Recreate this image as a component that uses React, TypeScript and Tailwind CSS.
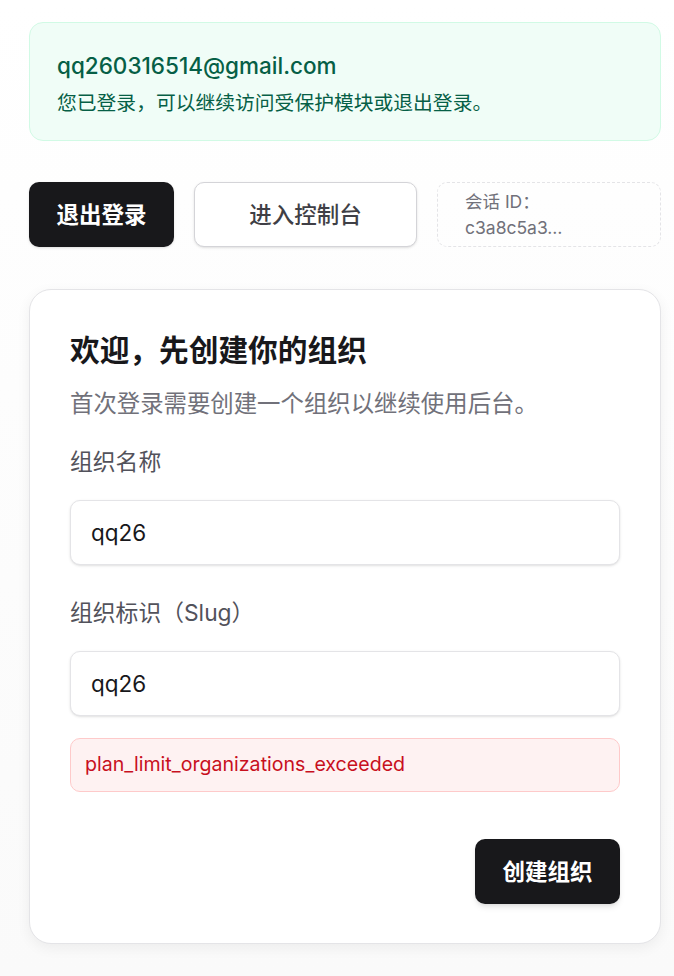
import { useState } from 'react';

export default function App() {
    const [orgName, setOrgName] = useState('qq26');
    const [orgSlug, setOrgSlug] = useState('qq26');

    return (
        <div className="min-h-screen bg-gradient-to-b from-white to-[#fafafa] font-['Inter','Noto_Sans_CJK_SC',sans-serif] pl-[29px] pr-[13px] pt-[22px] pb-[32px]">
            {/* Signed-in banner */}
            <div className="rounded-[14px] border border-[#d1fae5] bg-[#f0fdf7] px-[27px] pt-[28px] pb-[23px] text-[#065f46]">
                <div className="text-[22.5px] leading-[30px] font-medium">qq260316514@gmail.com</div>
                <p className="mt-[8px] text-[19.8px] leading-[28px]">您已登录，可以继续访问受保护模块或退出登录。</p>
            </div>

            {/* Actions */}
            <div className="mt-[41px] flex gap-[20px]">
                <button className="h-[65px] w-[145px] rounded-[10px] bg-[#18181b] text-[22.5px] font-bold text-white shadow-sm">
                    退出登录
                </button>
                <button className="h-[65px] w-[223px] rounded-[10px] border border-[#d4d4d8] bg-white text-[22.5px] font-medium text-[#3f3f46] shadow-sm">
                    进入控制台
                </button>
                <div className="h-[65px] flex-1 rounded-[10px] border border-dashed border-[#e4e4e7] px-[27px] py-[6px] text-[17.5px] leading-[26px] text-[#71717a]">
                    <div>会话 ID：</div>
                    <div>c3a8c5a3…</div>
                </div>
            </div>

            {/* Create organization */}
            <div className="mt-[42px] rounded-[22px] border border-[#e4e4e7] bg-white px-[40px] pt-[40px] pb-[39px] shadow-[0_4px_14px_rgba(0,0,0,0.06)]">
                <h1 className="text-[29.7px] leading-[40px] font-bold text-[#18181b]">欢迎，先创建你的组织</h1>
                <p className="mt-[18px] text-[23.4px] leading-[32px] text-[#71717a]">首次登录需要创建一个组织以继续使用后台。</p>

                <label className="mt-[26px] block text-[22.8px] leading-[32px] text-[#52525b]">组织名称</label>
                <input
                    value={orgName}
                    onChange={e => setOrgName(e.target.value)}
                    className="mt-[22px] block h-[65px] w-full rounded-[10px] border border-[#e4e4e7] bg-white px-[20px] text-[22.5px] text-[#18181b] shadow-sm outline-none"
                />

                <label className="mt-[32px] block text-[22.8px] leading-[32px] text-[#52525b]">组织标识（Slug）</label>
                <input
                    value={orgSlug}
                    onChange={e => setOrgSlug(e.target.value)}
                    className="mt-[22px] block h-[65px] w-full rounded-[10px] border border-[#e4e4e7] bg-white px-[20px] text-[22.5px] text-[#18181b] shadow-sm outline-none"
                />

                <div className="mt-[22px] flex h-[54px] items-center rounded-[10px] border border-[#fecaca] bg-[#fef2f2] px-[14px] text-[19.6px] text-[#c8101e]">
                    plan_limit_organizations_exceeded
                </div>

                <div className="mt-[47px] flex justify-end">
                    <button className="h-[65px] w-[145px] rounded-[10px] bg-[#18181b] text-[22.5px] font-bold text-white shadow-md">
                        创建组织
                    </button>
                </div>
            </div>
        </div>
    );
}
